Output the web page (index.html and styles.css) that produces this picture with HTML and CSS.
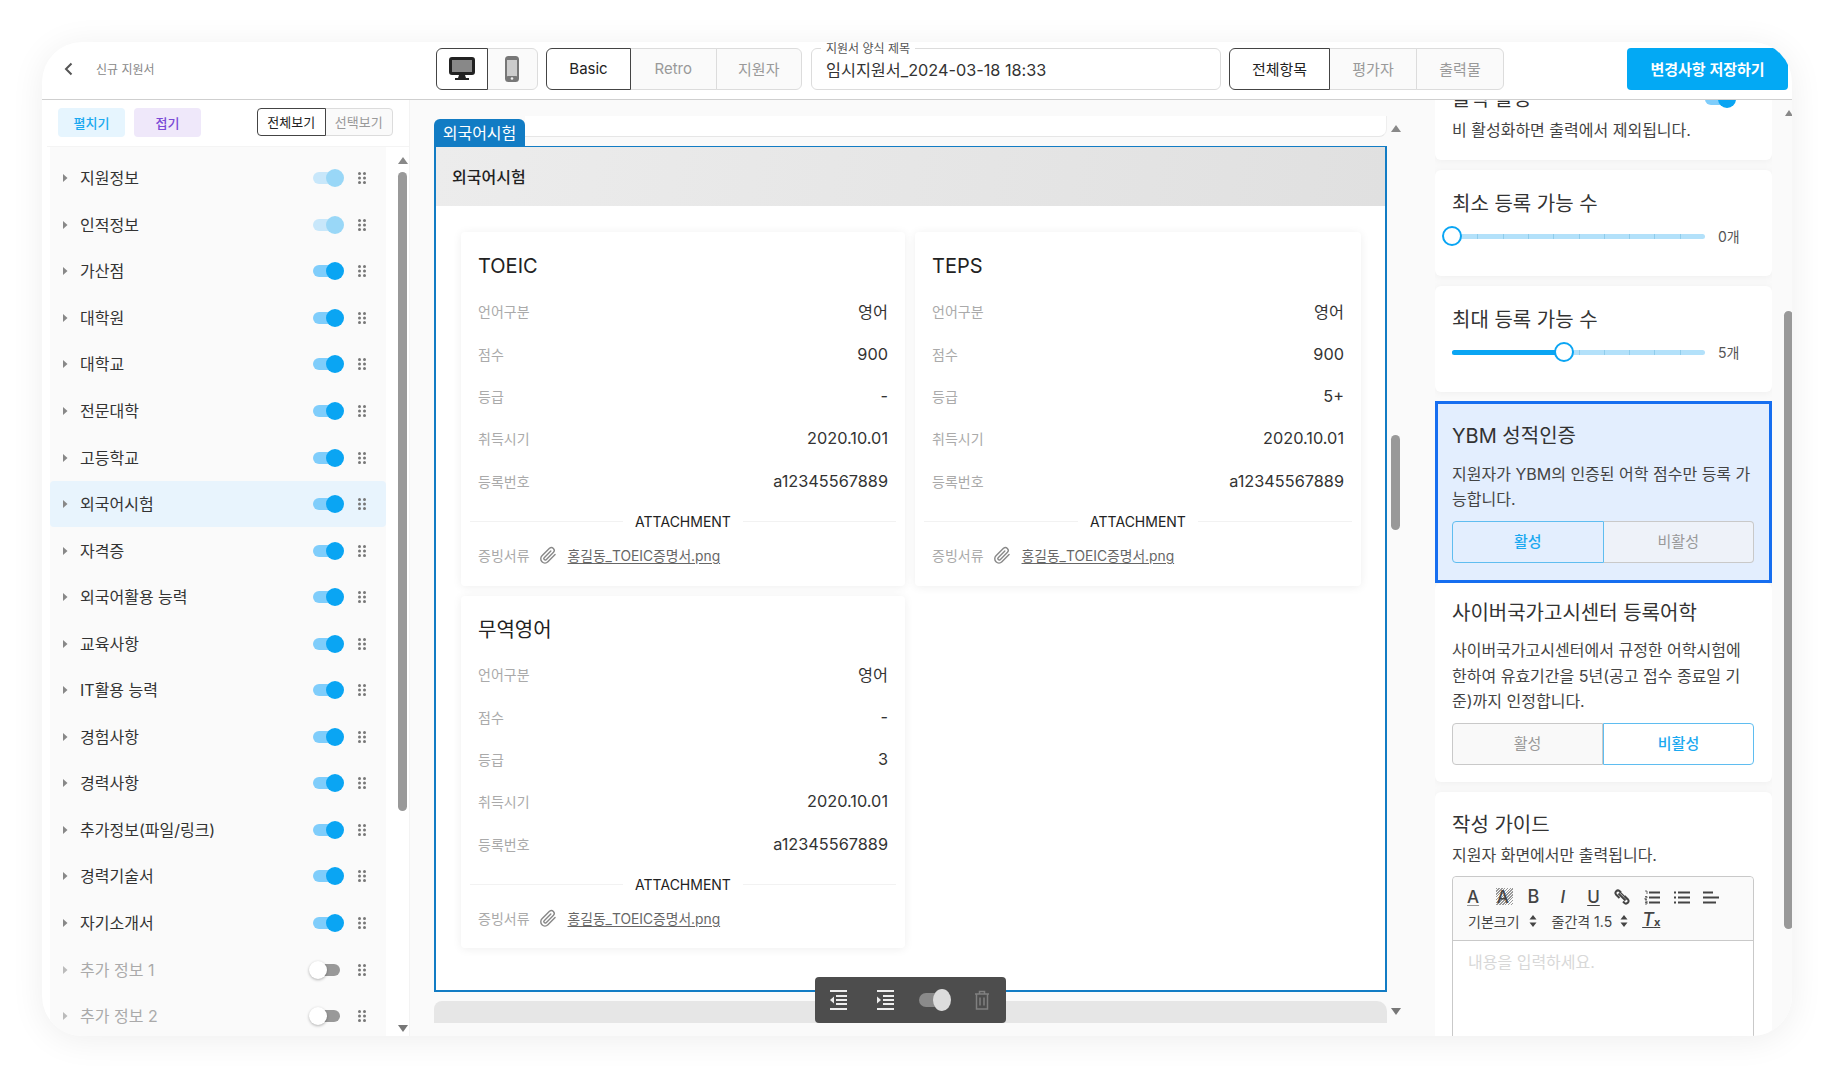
FILE: index.html
```html
<!DOCTYPE html>
<html lang="ko">
<head>
<meta charset="utf-8">
<title>신규 지원서</title>
<link rel="stylesheet" href="styles.css">
</head>
<body>
<svg class="defs" width="0" height="0" aria-hidden="true">
  <defs>
    <symbol id="grip" viewBox="0 0 8 12"><circle cx="1.5" cy="1.5" r="1.5"/><circle cx="6.5" cy="1.5" r="1.5"/><circle cx="1.5" cy="6" r="1.5"/><circle cx="6.5" cy="6" r="1.5"/><circle cx="1.5" cy="10.5" r="1.5"/><circle cx="6.5" cy="10.5" r="1.5"/></symbol>
    <symbol id="caret" viewBox="0 0 6 8"><path d="M1 0l4.5 4L1 8z"/></symbol>
    <symbol id="clip" viewBox="0 0 24 24"><path d="M20.5 11.5l-8.6 8.6a5 5 0 0 1-7.1-7.1l9-9a3.4 3.4 0 0 1 4.8 4.8l-8.8 8.8a1.7 1.7 0 0 1-2.4-2.4l8-8" fill="none" stroke="currentColor" stroke-width="1.7" stroke-linecap="round" stroke-linejoin="round"/></symbol>
    <symbol id="sort" viewBox="0 0 8 14"><path d="M4 1l3.5 4.5h-7zM4 13L.5 8.500h7z"/></symbol>
  </defs>
</svg>
<div class="window">
  <header class="topbar">
    <div class="crumb">
      <svg class="back" width="9" height="14" viewBox="0 0 9 14"><path d="M7.500 1.500L2 7l5.500 5.500" fill="none" stroke="#555" stroke-width="2"/></svg>
      <span>신규 지원서</span>
    </div>
    <div class="seg seg-device">
      <button class="seg-btn is-on">
        <svg width="26" height="24" viewBox="0 0 26 24"><rect x="1.500" y="1.500" width="23" height="15" rx="1.500" fill="#888" stroke="#222" stroke-width="3"/><path d="M10 18h6l1 3h3v2H6v-2h3z" fill="#222"/></svg>
      </button>
      <button class="seg-btn">
        <svg width="14" height="26" viewBox="0 0 14 26"><rect x="1" y="1" width="12" height="24" rx="2.500" fill="#ccc" stroke="#777" stroke-width="2"/><rect x="1" y="1" width="12" height="3" fill="#777"/><rect x="1" y="20" width="12" height="5" rx="2" fill="#777"/><circle cx="7" cy="22.500" r="1.300" fill="#eee"/></svg>
      </button>
    </div>
    <div class="seg seg-style">
      <button class="seg-btn is-on">Basic</button>
      <button class="seg-btn">Retro</button>
      <button class="seg-btn">지원자</button>
    </div>
    <div class="field">
      <span class="legend">지원서 양식 제목</span>
      <span class="field-value">임시지원서_2024-03-18 18:33</span>
    </div>
    <div class="seg seg-scope">
      <button class="seg-btn is-on">전체항목</button>
      <button class="seg-btn">평가자</button>
      <button class="seg-btn">출력물</button>
    </div>
    <button class="save">변경사항 저장하기</button>
  </header>

  <div class="main">
    <aside class="sidebar">
      <div class="side-top">
        <button class="chip chip-blue">펼치기</button>
        <button class="chip chip-purple">접기</button>
        <div class="seg seg-small">
          <button class="seg-btn is-on">전체보기</button>
          <button class="seg-btn">선택보기</button>
        </div>
      </div>
      <div class="side-body">
        <ul class="list">
          <li class="row"><svg class="caret"><use href="#caret"/></svg><span class="row-name">지원정보</span><span class="tog tog-dim"><i></i><b></b></span><svg class="grip"><use href="#grip"/></svg></li>
          <li class="row"><svg class="caret"><use href="#caret"/></svg><span class="row-name">인적정보</span><span class="tog tog-dim"><i></i><b></b></span><svg class="grip"><use href="#grip"/></svg></li>
          <li class="row"><svg class="caret"><use href="#caret"/></svg><span class="row-name">가산점</span><span class="tog"><i></i><b></b></span><svg class="grip"><use href="#grip"/></svg></li>
          <li class="row"><svg class="caret"><use href="#caret"/></svg><span class="row-name">대학원</span><span class="tog"><i></i><b></b></span><svg class="grip"><use href="#grip"/></svg></li>
          <li class="row"><svg class="caret"><use href="#caret"/></svg><span class="row-name">대학교</span><span class="tog"><i></i><b></b></span><svg class="grip"><use href="#grip"/></svg></li>
          <li class="row"><svg class="caret"><use href="#caret"/></svg><span class="row-name">전문대학</span><span class="tog"><i></i><b></b></span><svg class="grip"><use href="#grip"/></svg></li>
          <li class="row"><svg class="caret"><use href="#caret"/></svg><span class="row-name">고등학교</span><span class="tog"><i></i><b></b></span><svg class="grip"><use href="#grip"/></svg></li>
          <li class="row row-sel"><svg class="caret"><use href="#caret"/></svg><span class="row-name">외국어시험</span><span class="tog"><i></i><b></b></span><svg class="grip"><use href="#grip"/></svg></li>
          <li class="row"><svg class="caret"><use href="#caret"/></svg><span class="row-name">자격증</span><span class="tog"><i></i><b></b></span><svg class="grip"><use href="#grip"/></svg></li>
          <li class="row"><svg class="caret"><use href="#caret"/></svg><span class="row-name">외국어활용 능력</span><span class="tog"><i></i><b></b></span><svg class="grip"><use href="#grip"/></svg></li>
          <li class="row"><svg class="caret"><use href="#caret"/></svg><span class="row-name">교육사항</span><span class="tog"><i></i><b></b></span><svg class="grip"><use href="#grip"/></svg></li>
          <li class="row"><svg class="caret"><use href="#caret"/></svg><span class="row-name">IT활용 능력</span><span class="tog"><i></i><b></b></span><svg class="grip"><use href="#grip"/></svg></li>
          <li class="row"><svg class="caret"><use href="#caret"/></svg><span class="row-name">경험사항</span><span class="tog"><i></i><b></b></span><svg class="grip"><use href="#grip"/></svg></li>
          <li class="row"><svg class="caret"><use href="#caret"/></svg><span class="row-name">경력사항</span><span class="tog"><i></i><b></b></span><svg class="grip"><use href="#grip"/></svg></li>
          <li class="row"><svg class="caret"><use href="#caret"/></svg><span class="row-name">추가정보(파일/링크)</span><span class="tog"><i></i><b></b></span><svg class="grip"><use href="#grip"/></svg></li>
          <li class="row"><svg class="caret"><use href="#caret"/></svg><span class="row-name">경력기술서</span><span class="tog"><i></i><b></b></span><svg class="grip"><use href="#grip"/></svg></li>
          <li class="row"><svg class="caret"><use href="#caret"/></svg><span class="row-name">자기소개서</span><span class="tog"><i></i><b></b></span><svg class="grip"><use href="#grip"/></svg></li>
          <li class="row row-off"><svg class="caret"><use href="#caret"/></svg><span class="row-name">추가 정보 1</span><span class="tog tog-off"><i></i><b></b></span><svg class="grip"><use href="#grip"/></svg></li>
          <li class="row row-off"><svg class="caret"><use href="#caret"/></svg><span class="row-name">추가 정보 2</span><span class="tog tog-off"><i></i><b></b></span><svg class="grip"><use href="#grip"/></svg></li>
        </ul>
        <div class="vbar vbar-side">
          <span class="arrow-up"></span>
          <span class="thumb"></span>
          <span class="arrow-down"></span>
        </div>
      </div>
    </aside>

    <section class="center">
      <div class="doc">
        <div class="tabrow">
          <span class="tab">외국어시험</span>
          <span class="tabline"></span>
        </div>
        <div class="frame">
          <div class="frame-head">외국어시험</div>
          <div class="grid">
            <article class="card">
              <h3>TOEIC</h3>
              <dl class="kv"><dt>언어구분</dt><dd>영어</dd></dl>
              <dl class="kv"><dt>점수</dt><dd>900</dd></dl>
              <dl class="kv"><dt>등급</dt><dd>-</dd></dl>
              <dl class="kv"><dt>취득시기</dt><dd>2020.10.01</dd></dl>
              <dl class="kv"><dt>등록번호</dt><dd>a12345567889</dd></dl>
              <div class="divider">ATTACHMENT</div>
              <div class="file"><span class="file-label">증빙서류</span><svg class="clip"><use href="#clip"/></svg><a class="file-link">홍길동_TOEIC증명서.png</a></div>
            </article>
            <article class="card">
              <h3>TEPS</h3>
              <dl class="kv"><dt>언어구분</dt><dd>영어</dd></dl>
              <dl class="kv"><dt>점수</dt><dd>900</dd></dl>
              <dl class="kv"><dt>등급</dt><dd>5+</dd></dl>
              <dl class="kv"><dt>취득시기</dt><dd>2020.10.01</dd></dl>
              <dl class="kv"><dt>등록번호</dt><dd>a12345567889</dd></dl>
              <div class="divider">ATTACHMENT</div>
              <div class="file"><span class="file-label">증빙서류</span><svg class="clip"><use href="#clip"/></svg><a class="file-link">홍길동_TOEIC증명서.png</a></div>
            </article>
            <article class="card card-low">
              <h3>무역영어</h3>
              <dl class="kv"><dt>언어구분</dt><dd>영어</dd></dl>
              <dl class="kv"><dt>점수</dt><dd>-</dd></dl>
              <dl class="kv"><dt>등급</dt><dd>3</dd></dl>
              <dl class="kv"><dt>취득시기</dt><dd>2020.10.01</dd></dl>
              <dl class="kv"><dt>등록번호</dt><dd>a12345567889</dd></dl>
              <div class="divider">ATTACHMENT</div>
              <div class="file"><span class="file-label">증빙서류</span><svg class="clip"><use href="#clip"/></svg><a class="file-link">홍길동_TOEIC증명서.png</a></div>
            </article>
          </div>
        </div>
        <div class="hbar"></div>
        <div class="floatbar">
          <svg width="20" height="22" viewBox="0 0 20 22" fill="none" stroke="#eee" stroke-width="2"><path d="M2 2h17M8 7h11M8 11h11M8 15h11M2 20h17"/><path d="M6 7.500v7L2 11z" fill="#eee" stroke="none"/></svg>
          <svg class="float-indent" width="20" height="22" viewBox="0 0 20 22" fill="none" stroke="#eee" stroke-width="2"><path d="M2 2h17M8 7h11M8 11h11M8 15h11M2 20h17"/><path d="M2 7.500v7L6 11z" fill="#eee" stroke="none"/></svg>
          <span class="tog tog-dark"><i></i><b></b></span>
          <svg width="16" height="22" viewBox="0 0 16 22" fill="none" stroke="#808080" stroke-width="1.500"><path d="M1 5h14M5.500 5V2.500h5V5M2.500 5v15h11V5M6 8.500v8M10 8.500v8"/></svg>
        </div>
      </div>
      <div class="vbar vbar-center">
        <span class="arrow-up"></span>
        <span class="thumb"></span>
        <span class="arrow-down"></span>
      </div>
    </section>

    <aside class="right">
      <div class="stack">
        <div class="pcard pcard-first">
          <div class="ptitle-row"><h4>출력 활성</h4><span class="tog"><i></i><b></b></span></div>
          <p class="pdesc">비 활성화하면 출력에서 제외됩니다.</p>
        </div>
        <div class="pcard">
          <h4>최소 등록 가능 수</h4>
          <div class="slider">
            <div class="track"><span class="fill" style="width:0%"></span><span class="knob" style="left:0%"></span></div>
            <span class="slider-val">0개</span>
          </div>
        </div>
        <div class="pcard">
          <h4>최대 등록 가능 수</h4>
          <div class="slider">
            <div class="track"><span class="fill" style="width:44.3%"></span><span class="knob" style="left:44.3%"></span></div>
            <span class="slider-val">5개</span>
          </div>
        </div>
        <div class="pcard pcard-hi">
          <h4>YBM 성적인증</h4>
          <p class="pdesc pdesc-long">지원자가 YBM의 인증된 어학 점수만 등록 가능합니다.</p>
          <div class="pair">
            <button class="pair-btn is-on">활성</button>
            <button class="pair-btn">비활성</button>
          </div>
        </div>
        <div class="pcard pcard-cyber">
          <h4>사이버국가고시센터 등록어학</h4>
          <p class="pdesc pdesc-long">사이버국가고시센터에서 규정한 어학시험에 한하여 유효기간을 5년(공고 접수 종료일 기준)까지 인정합니다.</p>
          <div class="pair">
            <button class="pair-btn">활성</button>
            <button class="pair-btn is-on">비활성</button>
          </div>
        </div>
        <div class="pcard pcard-guide">
          <h4>작성 가이드</h4>
          <p class="pdesc">지원자 화면에서만 출력됩니다.</p>
          <div class="editor">
            <div class="ed-tools">
              <div class="ed-row">
                <span class="ed-i ed-a">A</span>
                <span class="ed-i ed-hatch">A</span>
                <span class="ed-i ed-b">B</span>
                <span class="ed-i ed-it">I</span>
                <span class="ed-i ed-u">U</span>
                <span class="ed-i"><svg width="16" height="16" viewBox="0 0 16 16" fill="none" stroke="#444" stroke-width="2"><path d="M7 3.500L5.500 2a2.500 2.500 0 0 0-3.500 3.500l3.500 3.500M9 12.500l1.500 1.500a2.500 2.500 0 0 0 3.500-3.500L10.500 7M4.500 4.500l7 7"/><path d="M5.500 2.500l8 8" stroke-width="1.200"/></svg></span>
                <span class="ed-i"><svg width="16" height="15" viewBox="0 0 16 15" fill="none" stroke="#444"><path d="M5 2.500h11M5 7.500h11M5 12.500h11" stroke-width="2"/><path d="M1 1h2v3M1 6.500h2v1.500H1v1.500h2M1 11h2v3H1M1 12.500h2" stroke-width=".8"/></svg></span>
                <span class="ed-i"><svg width="16" height="13" viewBox="0 0 16 13" fill="none" stroke="#444" stroke-width="2"><path d="M4 1.500h12M4 6.500h12M4 11.500h12M0 1.500h2M0 6.500h2M0 11.500h2"/></svg></span>
                <span class="ed-i"><svg width="16" height="13" viewBox="0 0 16 13" fill="none" stroke="#444" stroke-width="2"><path d="M0 1.500h10M0 6.500h16M0 11.500h13"/></svg></span>
              </div>
              <div class="ed-row ed-row2">
                <span class="ed-sel ed-size">기본크기</span><svg class="sort"><use href="#sort"/></svg>
                <span class="ed-sel ed-line">줄간격 1.5</span><svg class="sort"><use href="#sort"/></svg>
                <span class="ed-clear">T<small>x</small></span>
              </div>
            </div>
            <div class="ed-body">내용을 입력하세요.</div>
          </div>
        </div>
      </div>
      <div class="vbar vbar-right">
        <span class="arrow-up"></span>
        <span class="thumb"></span>
        <span class="arrow-down"></span>
      </div>
    </aside>
  </div>
</div>
</body>
</html>
```

FILE: styles.css
```css
* { box-sizing: border-box; }
html, body { margin: 0; height: 100%; }
body {
  height: 100vh;
  padding: 42px 0 0 42px;
  overflow: hidden;
  background: #fff;
  color: #333;
  font-family: Inter, "Noto Sans CJK KR", sans-serif;
}
.defs { position: absolute; }
button { font: inherit; padding: 0; cursor: pointer; }
h3, h4, p, ul, dl, dd { margin: 0; padding: 0; }
ul { list-style: none; }

.window {
  width: 1750px;
  height: 994px;
  display: flex;
  flex-direction: column;
  background: #fff;
  border-radius: 40px;
  overflow: hidden;
  box-shadow: 0 4px 34px rgba(0, 0, 0, .07);
}

/* top bar */
.topbar {
  flex: none;
  height: 58px;
  padding-top: 6px;
  display: flex;
  align-items: flex-start;
  border-bottom: 1px solid #cfcfcf;
}
.crumb {
  width: 394px;
  height: 42px;
  padding: 0 0 2px 22px;
  display: flex;
  align-items: center;
  gap: 23px;
  font-size: 12px;
  color: #888;
}
.crumb .back { margin-top: 2px; }
.seg { display: flex; height: 42px; }
.seg-btn {
  flex: 1;
  display: flex;
  align-items: center;
  justify-content: center;
  margin-left: -1px;
  padding-bottom: 2px;
  background: #fafafa;
  border: 1px solid #dcdcdc;
  color: #999;
  font-size: 15px;
}
.seg-btn:first-child { margin-left: 0; border-radius: 6px 0 0 6px; }
.seg-btn:last-child { border-radius: 0 6px 6px 0; }
.seg-btn.is-on { position: relative; background: #fff; border-color: #444; color: #222; }
.seg-device .seg-btn { padding-bottom: 0; }
.seg-device { width: 102px; }
.seg-style { width: 256px; margin-left: 8px; }
.seg-scope { width: 275px; margin-left: 8px; }
.seg-style .seg-btn:first-child { flex: none; width: 85px; }
.seg-scope .seg-btn:first-child { flex: none; width: 101px; }
.field {
  position: relative;
  width: 410px;
  height: 42px;
  margin-left: 9px;
  padding-left: 14px;
  padding-bottom: 1px;
  display: flex;
  align-items: center;
  border: 1px solid #dcdcdc;
  border-radius: 6px;
  font-size: 16.25px;
  color: #333;
}
.legend {
  position: absolute;
  top: -8px;
  left: 9px;
  padding: 0 5px;
  background: #fff;
  font-size: 12px;
  line-height: 16px;
  color: #555;
}
.save {
  margin-left: auto;
  margin-right: 4px;
  padding-bottom: 2px;
  width: 161px;
  height: 42px;
  border: 0;
  border-radius: 4px;
  background: #03a9f4;
  color: #fff;
  font-size: 15px;
  font-weight: 600;
}

/* main */
.main { flex: 1; min-height: 0; display: flex; }

/* sidebar */
.sidebar {
  flex: none;
  width: 368px;
  border-right: 1px solid #f3f3f3;
  display: flex;
  flex-direction: column;
  min-height: 0;
}
.side-top {
  flex: none;
  height: 47px;
  margin-left: 5px;
  padding: 8px 16px 0 11px;
  display: flex;
  align-items: flex-start;
  border-bottom: 1px solid #f4f4f4;
}
.chip {
  width: 67px;
  height: 29px;
  padding-bottom: 1px;
  border: 0;
  border-radius: 4px;
  font-size: 13px;
  font-weight: 500;
}
.chip-blue { background: #e6f5fe; color: #1ba9f0; }
.chip-purple { width: 67px; margin-left: 9px; background: #efe8fa; color: #7b49d6; }
.seg-small { width: 136px; height: 28px; margin-left: auto; }
.seg-small .seg-btn { font-size: 13px; }
.seg-small .seg-btn:first-child { border-radius: 4px 0 0 4px; }
.seg-small .seg-btn:last-child { border-radius: 0 4px 4px 0; }
.side-body { flex: 1; min-height: 0; display: flex; }
.list {
  width: 336px;
  margin-left: 8px;
  padding-top: 8px;
  background: #fafafa;
  overflow: hidden;
}
.row {
  height: 46.55px;
  padding-left: 12px;
  display: flex;
  align-items: center;
  font-size: 16px;
  color: #333;
  border-radius: 4px;
}
.row-sel { background: #e8f4fd; }
.row-off .row-name { color: #aaa; }
.caret { width: 6px; height: 8px; margin-right: 12px; fill: #888; flex: none; }
.row-off .caret { fill: #bbb; }
.row-name { flex: 1; padding-bottom: 2px; }
.tog {
  position: relative;
  flex: none;
  display: block;
  width: 32px;
  height: 18px;
}
.tog i {
  position: absolute;
  left: 0;
  top: 3px;
  width: 27px;
  height: 12px;
  border-radius: 6px;
  background: #7fcdfb;
}
.tog b {
  position: absolute;
  left: 13px;
  top: 0;
  width: 18px;
  height: 18px;
  border-radius: 50%;
  background: #0aa5f3;
}
.tog-dim { opacity: .4; }
.tog-off i { left: 5px; width: 22px; background: #999; }
.tog-off b { left: -4px; background: #fff; box-shadow: 0 1px 3px rgba(0, 0, 0, .3); }
.grip { width: 8px; height: 12px; margin-left: 13px; margin-right: 20px; fill: #777; flex: none; }

.vbar { position: relative; flex: none; width: 9px; display: flex; flex-direction: column; align-items: center; }
.arrow-up, .arrow-down {
  flex: none;
  width: 0;
  height: 0;
  border-left: 5px solid transparent;
  border-right: 5px solid transparent;
}
.arrow-up { border-bottom: 7px solid #888; }
.arrow-down { border-top: 7px solid #777; margin-top: auto; }
.thumb { flex: none; width: 9px; background: #999; border-radius: 5px; }
.vbar-side { margin-left: 12px; padding: 10px 0 4px; }
.vbar-side .thumb { height: 639px; margin-top: 8px; }

/* center */
.center {
  flex: none;
  width: 1020px;
  padding: 16px 0 13px 24px;
  display: flex;
  background: #fafafa;
}
.doc { position: relative; flex: none; width: 953px; display: flex; flex-direction: column; }
.tabrow { flex: none; height: 30px; display: flex; align-items: flex-start; }
.tab {
  flex: none;
  width: 91px;
  height: 27px;
  margin-top: 3px;
  padding-bottom: 2px;
  display: flex;
  align-items: center;
  justify-content: center;
  background: #127cc4;
  color: #fff;
  font-size: 16px;
  border-radius: 6px 6px 0 0;
}
.tabline {
  flex: 1;
  height: 21px;
  background: #fff;
  border-bottom: 1px solid #e6e6e6;
  border-right: 1px solid #eee;
  border-radius: 0 0 8px 0;
}
.frame {
  flex: none;
  height: 846px;
  background: #fff;
  border: 2px solid #127cc4;
  border-top-width: 1px;
  overflow: hidden;
}
.frame-head {
  height: 59px;
  padding: 0 0 2px 16px;
  display: flex;
  align-items: center;
  background: linear-gradient(100deg, #ececec, #e0e0e0);
  font-size: 16px;
  font-weight: 500;
  color: #222;
}
.grid {
  padding: 26px 0 0 25px;
  display: grid;
  grid-template-columns: 444px 446px;
  grid-template-rows: 354px 352px;
  gap: 10px;
}
.card {
  padding: 20px 17px 0;
  background: #fff;
  border-radius: 4px;
  box-shadow: 0 1px 10px rgba(0, 0, 0, .07);
}
.card h3 { margin-bottom: 11px; font-size: 20px; line-height: 28px; font-weight: 400; color: #222; }
.card-low h3 { margin-bottom: 10px; }
.kv { height: 42.4px; padding-bottom: 2px; display: flex; align-items: center; justify-content: space-between; }
.kv dt { font-size: 14px; color: #aaa; }
.kv dd { font-size: 16.3px; color: #333; }
.divider {
  height: 22px;
  margin: 9px -8px 0;
  padding-bottom: 2px;
  display: flex;
  align-items: center;
  gap: 12px;
  font-size: 14px;
  color: #222;
}
.divider::before, .divider::after { content: ""; flex: 1; height: 1px; background: #f2f2f2; }
.file { height: 24px; margin-top: 10px; padding-bottom: 2px; display: flex; align-items: center; font-size: 14px; color: #aaa; }
.clip { width: 20px; height: 20px; margin: 0 10px 0 8px; color: #888; flex: none; }
.file-link { font-size: 13.8px; color: #666; text-decoration: underline; text-underline-offset: 2px; }
.hbar {
  flex: none;
  height: 22px;
  margin-top: 9px;
  background: #e6e6e6;
  border-radius: 8px 10px 0 0;
}
.floatbar {
  position: absolute;
  left: 381px;
  top: 861px;
  width: 191px;
  height: 46px;
  padding: 0 16px 0 13px;
  display: flex;
  align-items: center;
  background: #4d4d4d;
  border-radius: 4px;
}
.float-indent { margin-left: 27px; }
.tog-dark { width: 32px; height: 22px; margin-left: 24px; margin-right: auto; }
.tog-dark i { background: #8a8a8a; width: 28px; left: 0; top: 4px; height: 14px; border-radius: 7px; }
.tog-dark b { left: 14px; top: 0; width: 18px; height: 22px; background: #dcdcdc; border-radius: 50%; }
.vbar-center { margin-left: 4px; padding: 9px 0 8px; }
.vbar-center .thumb { height: 95px; margin-top: 303px; }

/* right panel */
.right { flex: 1; min-width: 0; padding-left: 5px; display: flex; background: #fafafa; }
.stack { flex: none; width: 337px; height: 100%; display: flex; flex-direction: column; gap: 10px; overflow: hidden; }
.pcard {
  flex: none;
  padding: 20px 18px 0 17px;
  height: 106px;
  background: #fff;
  border-radius: 6px;
  box-shadow: 0 1px 8px rgba(0, 0, 0, .05);
}
.pcard h4 { font-size: 20px; line-height: 28px; font-weight: 400; color: #333; }
.pdesc { font-size: 16px; line-height: 25px; margin-top: 5px; color: #444; }
.pdesc-long { margin-top: 11.5px; line-height: 25.5px; }
.pcard-first { height: 90px; margin-top: -30px; padding-top: 15px; }
.ptitle-row { display: flex; justify-content: space-between; align-items: center; height: 28px; }
.ptitle-row .tog { margin-right: 17px; }
.slider { height: 24px; margin-top: 6px; display: flex; align-items: center; }
.track {
  position: relative;
  width: 253px;
  height: 5px;
  border-radius: 3px;
  background: repeating-linear-gradient(90deg, #8fcdec 0 1px, #b3e1fa 1px 25.3px);
}
.fill { display: block; height: 100%; border-radius: 3px; background: #0aa5f3; }
.knob {
  position: absolute;
  top: 50%;
  width: 20px;
  height: 20px;
  margin: -10px 0 0 -10px;
  background: #fff;
  border: 2px solid #0aa5f3;
  border-radius: 50%;
}
.slider-val { margin-left: 13px; padding-bottom: 1px; font-size: 14px; color: #555; }
.pcard-hi {
  height: 182px;
  margin-top: -1px;
  margin-bottom: -10px;
  padding: 18px 15px 0 14px;
  position: relative;
  background: #e3eefe;
  border: 3px solid #166ef0;
  border-radius: 0;
  box-shadow: none;
}
.pair { display: flex; height: 42px; margin-top: 8px; }
.pair-btn {
  flex: 1;
  padding-bottom: 2px;
  border: 1px solid #c9c9c9;
  background: rgba(245, 245, 245, .6);
  color: #999;
  font-size: 15px;
  border-radius: 4px 0 0 4px;
}
.pair-btn:last-child { border-left: 0; border-radius: 0 4px 4px 0; }
.pair-btn.is-on { border: 1px solid #5fbdf0; background: rgba(255, 255, 255, .9); color: #1ba9f0; font-weight: 500; }
.pcard-hi .pair-btn.is-on { background: transparent; }
.pcard-cyber { height: 199px; padding-top: 16px; }
.pcard-cyber .pdesc-long { margin-top: 11px; }
.pcard-guide { height: 260px; padding-top: 19px; }
.pcard-guide .pdesc { margin-top: 3.5px; }
.editor { margin-top: 8.5px; height: 220px; border: 1px solid #c9c9c9; border-radius: 4px 4px 0 0; }
.ed-tools { height: 64px; padding: 8px 0 0 12px; background: #fafafa; border-bottom: 1px solid #c9c9c9; border-radius: 4px 4px 0 0; }
.ed-row { display: flex; align-items: center; height: 24px; color: #444; }
.ed-i { flex: none; width: 29.8px; display: flex; justify-content: flex-start; font-size: 17px; line-height: 24px; font-weight: 500; }
.ed-a { padding-left: 2px; text-decoration: underline; text-decoration-color: #999; text-underline-offset: 2px; }
.ed-hatch { padding-left: 2px; background: repeating-linear-gradient(135deg, #999 0 1px, transparent 1px 2px) no-repeat 1px 3px / 17px 17px; }
.ed-b { padding-left: 3px; font-size: 18px; }
.ed-it { font-style: italic; padding-left: 6px; }
.ed-u { padding-left: 3px; text-decoration: underline; text-underline-offset: 2px; }
.ed-row2 { font-size: 14px; }
.ed-sel { color: #444; }
.ed-size { margin-left: 3px; }
.sort { width: 8px; height: 14px; fill: #444; margin-left: 9px; flex: none; }
.ed-line { margin-left: 15px; }
.sort + .ed-line + .sort { margin-left: 8px; }
.ed-clear { margin-left: 14px; font-size: 18px; font-style: italic; font-weight: 500; text-decoration: underline; line-height: 20px; }
.ed-clear small { font-size: 11px; font-style: normal; font-weight: 700; }
.ed-body { padding: 9px 15px; font-size: 16px; line-height: 24px; color: #d8d8d8; }
.vbar-right { margin-left: 12px; padding: 10px 0 8px; }
.vbar-right .arrow-up { border-left-width: 4px; border-right-width: 4px; border-bottom-width: 6px; }
.vbar-right .arrow-down { border-left-width: 2px; border-right-width: 2px; border-top-width: 3px; }
.vbar-right .thumb { height: 618px; margin-top: 195px; }
```
